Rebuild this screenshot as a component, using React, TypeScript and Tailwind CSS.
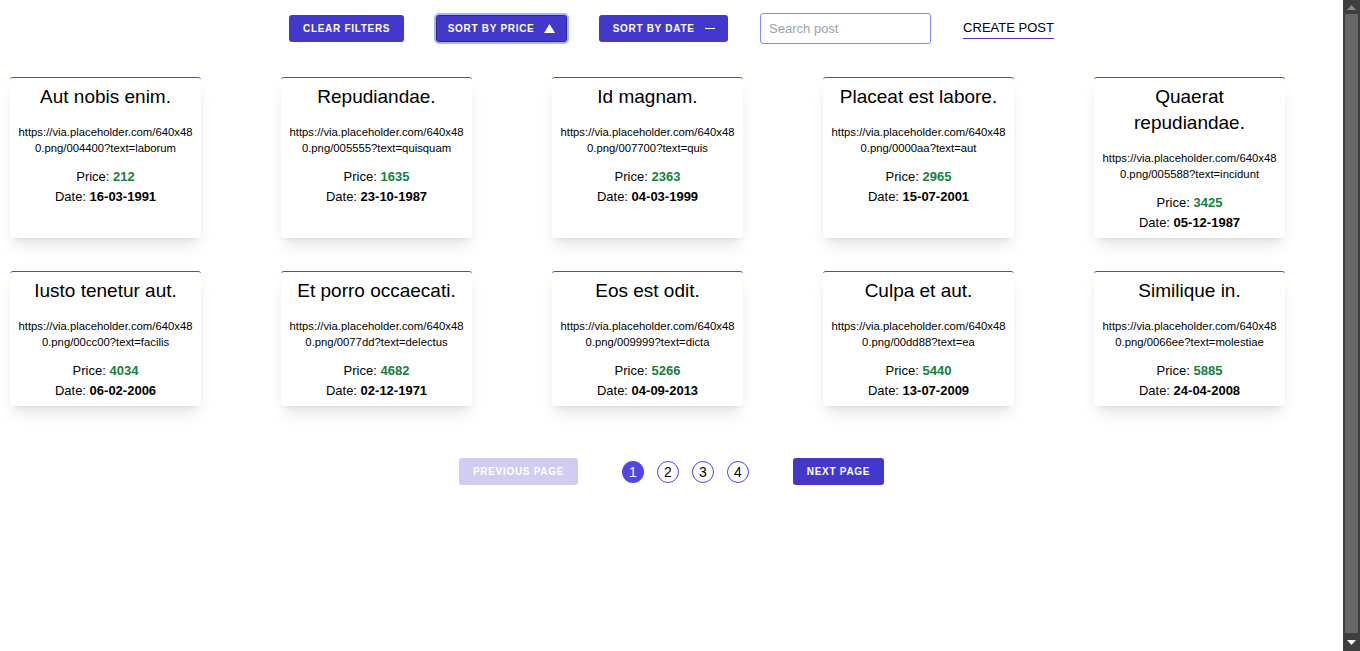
import { useState } from 'react'

interface Post {
  title: string
  url: string
  price: number
  date: string
}

const POSTS: Post[] = [
  { title: 'Aut nobis enim.', url: 'https://via.placeholder.com/640x480.png/004400?text=laborum', price: 212, date: '16-03-1991' },
  { title: 'Repudiandae.', url: 'https://via.placeholder.com/640x480.png/005555?text=quisquam', price: 1635, date: '23-10-1987' },
  { title: 'Id magnam.', url: 'https://via.placeholder.com/640x480.png/007700?text=quis', price: 2363, date: '04-03-1999' },
  { title: 'Placeat est labore.', url: 'https://via.placeholder.com/640x480.png/0000aa?text=aut', price: 2965, date: '15-07-2001' },
  { title: 'Quaerat repudiandae.', url: 'https://via.placeholder.com/640x480.png/005588?text=incidunt', price: 3425, date: '05-12-1987' },
  { title: 'Iusto tenetur aut.', url: 'https://via.placeholder.com/640x480.png/00cc00?text=facilis', price: 4034, date: '06-02-2006' },
  { title: 'Et porro occaecati.', url: 'https://via.placeholder.com/640x480.png/0077dd?text=delectus', price: 4682, date: '02-12-1971' },
  { title: 'Eos est odit.', url: 'https://via.placeholder.com/640x480.png/009999?text=dicta', price: 5266, date: '04-09-2013' },
  { title: 'Culpa et aut.', url: 'https://via.placeholder.com/640x480.png/00dd88?text=ea', price: 5440, date: '13-07-2009' },
  { title: 'Similique in.', url: 'https://via.placeholder.com/640x480.png/0066ee?text=molestiae', price: 5885, date: '24-04-2008' },
]

const btn =
  'h-[27px] rounded-[3px] bg-[#4338ca] text-white text-[10px] font-bold tracking-[0.07em] uppercase flex items-center justify-center gap-2.5'

function PostCard({ post }: { post: Post }) {
  return (
    <div className="bg-white rounded-[3px] border-t border-[#4f46e5] shadow-lg px-[8px] pt-[6px] pb-[5px] text-center text-black">
      <h2 className="text-[19px] leading-[26px]">{post.title}</h2>
      <p className="mt-[14px] text-[11.3px] leading-4 break-all">{post.url}</p>
      <p className="mt-[11px] text-[13px] leading-5">
        Price: <span className="font-bold text-[#15803d]">{post.price}</span>
      </p>
      <p className="text-[13px] leading-5">
        Date: <span className="font-bold">{post.date}</span>
      </p>
    </div>
  )
}

function Scrollbar() {
  return (
    <div className="w-[17px] h-full bg-[#3f3f3f] flex flex-col items-center">
      <div className="h-[14px] flex items-center justify-center">
        <svg width="9" height="5" viewBox="0 0 9 5"><path d="M4.5 0 L9 5 L0 5 Z" fill="#8a8a8a" /></svg>
      </div>
      <div className="flex-1 w-[13px] bg-[#686868]" />
      <div className="h-[18px] flex items-center justify-center">
        <svg width="9" height="5" viewBox="0 0 9 5"><path d="M0 0 L9 0 L4.5 5 Z" fill="#ffffff" /></svg>
      </div>
    </div>
  )
}

export default function App() {
  const [page, setPage] = useState(1)
  const [search, setSearch] = useState('')

  return (
    <div className="flex h-[651px] w-full overflow-hidden bg-white" style={{ fontFamily: '"Liberation Sans", Arial, sans-serif' }}>
      <div className="flex-1 flex flex-col">
        {/* Toolbar */}
        <div className="pt-[13px] flex items-center justify-center gap-8">
          <button className={`${btn} w-[115px]`}>Clear filters</button>
          <button className={`${btn} w-[131px] border border-[#2e2a8a] ring-2 ring-[#a5b4fc]`}>
            Sort by price
            <svg width="11" height="9" viewBox="0 0 11 9"><path d="M5.5 0 L11 9 L0 9 Z" fill="white" /></svg>
          </button>
          <button className={`${btn} w-[129px]`}>
            Sort by date
            <span className="block w-[10px] h-[1.5px] bg-white" />
          </button>
          <input
            value={search}
            onChange={e => setSearch(e.target.value)}
            placeholder="Search post"
            className="w-[171px] h-[31px] rounded-[3px] border border-[#818cf8] px-2 text-[13px] text-black placeholder:text-[#9ca3af] outline-none"
          />
          <a href="#" className="text-[13px] text-black leading-5 border-b border-[#4338ca]">CREATE POST</a>
        </div>

        {/* Posts */}
        <div className="mt-[33px] pl-[10px] grid grid-cols-[repeat(5,191px)] gap-x-[80px] gap-y-[33px]">
          {POSTS.map(p => (
            <PostCard key={p.title} post={p} />
          ))}
        </div>

        {/* Pagination */}
        <div className="mt-[52px] flex items-center justify-center gap-11">
          <button disabled className={`${btn} w-[119px] bg-[#d0cdf0]`}>Previous page</button>
          <div className="flex items-center gap-[13px]">
            {[1, 2, 3, 4].map(n => (
              <button
                key={n}
                onClick={() => setPage(n)}
                className={
                  n === page
                    ? 'w-[22px] h-[22px] rounded-full bg-[#4f46e5] text-white text-sm flex items-center justify-center'
                    : 'w-[22px] h-[22px] rounded-full border border-[#4f46e5] bg-white text-black text-sm flex items-center justify-center'
                }
              >
                {n}
              </button>
            ))}
          </div>
          <button className={`${btn} w-[91px]`}>Next page</button>
        </div>
      </div>
      <Scrollbar />
    </div>
  )
}
